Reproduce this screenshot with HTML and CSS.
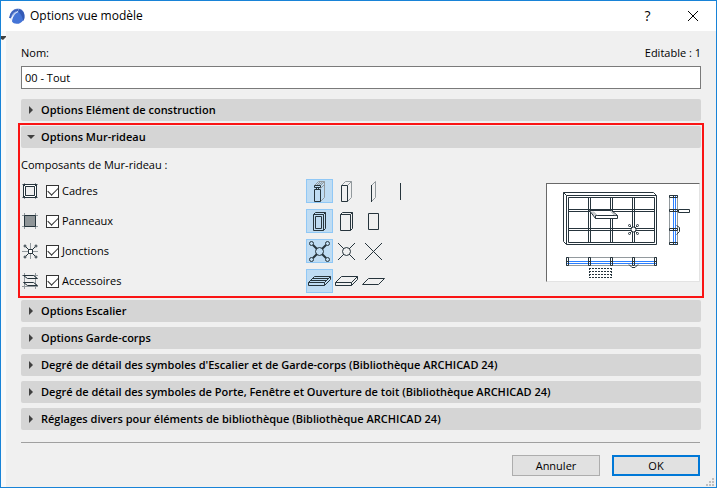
FILE: index.html
```html
<!DOCTYPE html>
<html lang="fr">
<head>
    <meta charset="UTF-8">
    <meta name="viewport" content="width=device-width, initial-scale=1.0">
    <title>Options vue modèle</title>
    <link rel="stylesheet" href="styles.css">
</head>
<body>
    <div class="window">
        <header class="titlebar">
            <svg class="logo" width="16" height="16" viewBox="0 0 16 16">
                <path d="M1 11C0 5 4 .5 9 .5c4 0 6.500 3.500 6.500 7.500 0 2-.5 4-2 5L9 3z" fill="#7f9fe0"/>
                <path d="M1 10C1.500 5 5 2 9 2" fill="none" stroke="#3d62bb" stroke-width="2"/>
                <path d="M2 12.500C3 8 5 5 9 4" fill="none" stroke="#e6edfb" stroke-width="1"/>
                <path d="M10 1c4 1 5.500 4 5.500 7.500 0 2-.5 3.500-1.500 4.500L9 4z" fill="#3359b5"/>
                <path d="M3 13.500C3.500 9 6 5 9.500 4c2.500 2 4 5 4.500 8.500-2 2.500-4 3.500-6.500 3.300-2 0-3.500-1-4.500-2.300z" fill="#4474d6"/>
            </svg>
            <h1>Options vue modèle</h1>
            <button type="button" class="title-but" aria-label="Aide">?</button>
            <button type="button" class="title-but" aria-label="Fermer">
                <svg width="12" height="12" viewBox="0 0 12 12"><path d="M1 1l10 10M11 1L1 11" stroke="#000" fill="none"/></svg>
            </button>
        </header>

        <form class="content">
            <div class="name-row">
                <label for="nom">Nom:</label>
                <span>Editable : 1</span>
            </div>
            <input type="text" id="nom" class="name-input" value="00 - Tout">

            <div class="sections">
                <details>
                    <summary>Options Elément de construction</summary>
                </details>

                <details class="highlight" open>
                    <summary>Options Mur-rideau</summary>
                    <p class="subtitle">Composants de Mur-rideau :</p>
                    <div class="panel">
                        <div class="components">
                            <div class="component">
                                <svg class="icon" width="16" height="16" viewBox="0 0 16 16">
                                    <path class="pale" d="M0 1.500h16M0 14.500h16M2.500 0v16M13.500 0v16"/>
                                    <path class="ink paper" d="M1.500 1.500h13v13h-13z"/>
                                    <path class="ink back" d="M3.500 3.500h9v9h-9zM1.500 1.500l2 2M14.500 1.500l-2 2M1.500 14.500l2-2M14.500 14.500l-2-2"/>
                                </svg>
                                <input type="checkbox" id="cadres" checked>
                                <label for="cadres">Cadres</label>
                                <div class="choices">
                                    <button type="button" class="choice selected" aria-label="Cadres détaillés">
                                        <svg width="27" height="24" viewBox="0 0 27 24">
                                            <path class="pale" d="M8.500 6.500l4-4h6v16l-4 4M14.500 6.500l4-4M10.500 6.500l4-4M14.500 9.500l4-4M12.500 6l4-3"/>
                                            <path class="ink" d="M8.500 10.500h6v12h-6zM8.500 6.500h6v2h-6zM10.500 8v2M12.500 8v2"/>
                                        </svg>
                                    </button>
                                    <button type="button" class="choice" aria-label="Cadres simples">
                                        <svg width="27" height="24" viewBox="0 0 27 24">
                                            <path class="pale" d="M8.500 6.500l4-4h6v16l-4 4M14.500 6.500l4-4"/>
                                            <path class="ink" d="M8.500 6.500h6v16h-6z"/>
                                        </svg>
                                    </button>
                                    <button type="button" class="choice" aria-label="Cadres plans">
                                        <svg width="27" height="24" viewBox="0 0 27 24">
                                            <path class="pale" d="M11.500 6.500l4-4v16l-4 4"/>
                                            <path class="ink" d="M11.500 6v17"/>
                                        </svg>
                                    </button>
                                    <button type="button" class="choice" aria-label="Cadres filaires">
                                        <svg width="27" height="24" viewBox="0 0 27 24"><path class="ink" d="M13.500 4v17"/></svg>
                                    </button>
                                </div>
                            </div>

                            <div class="component">
                                <svg class="icon" width="16" height="16" viewBox="0 0 16 16">
                                    <path class="pale" d="M0 2.500h16M0 13.500h16M2.500 0v16M13.500 0v16"/>
                                    <path class="ink solid" d="M2.500 2.500h11v11h-11z"/>
                                </svg>
                                <input type="checkbox" id="panneaux" checked>
                                <label for="panneaux">Panneaux</label>
                                <div class="choices">
                                    <button type="button" class="choice selected" aria-label="Panneaux détaillés">
                                        <svg width="27" height="24" viewBox="0 0 27 24">
                                            <path class="ink" d="M7.500 5.500h10v16h-10zM9.500 7.500h6v12h-6zM7.500 5.500l2-2h10v16l-2 2M17.500 5.500l2-2"/>
                                        </svg>
                                    </button>
                                    <button type="button" class="choice" aria-label="Panneaux simples">
                                        <svg width="27" height="24" viewBox="0 0 27 24">
                                            <path class="ink" d="M7.500 5.500h10v16h-10zM7.500 5.500l2-2h10v16l-2 2M17.500 5.500l2-2"/>
                                        </svg>
                                    </button>
                                    <button type="button" class="choice" aria-label="Panneaux plans">
                                        <svg width="27" height="24" viewBox="0 0 27 24"><path class="ink" d="M8.500 4.500h10v16h-10z"/></svg>
                                    </button>
                                </div>
                            </div>

                            <div class="component">
                                <svg class="icon" width="16" height="16" viewBox="0 0 16 16">
                                    <path class="pale" d="M0 8.500h16M8.500 0v16"/>
                                    <path class="ink" d="M4 4l3 3M13 4l-3 3M4 13l3-3M13 13l-3-3"/>
                                    <path class="ink paper" d="M6.500 6.500h4v4h-4z"/>
                                    <g class="ink"><circle cx="3" cy="3" r="1"/><circle cx="14" cy="3" r="1"/><circle cx="3" cy="14" r="1"/><circle cx="14" cy="14" r="1"/></g>
                                </svg>
                                <input type="checkbox" id="jonctions" checked>
                                <label for="jonctions">Jonctions</label>
                                <div class="choices">
                                    <button type="button" class="choice selected" aria-label="Jonctions détaillées">
                                        <svg width="27" height="24" viewBox="0 0 27 24">
                                            <path class="ink thick" d="M7 6l4 4M20 6l-4 4M7 19l4-4M20 19l-4-4"/>
                                            <g class="ink"><circle cx="13.500" cy="12.500" r="4"/><circle cx="5.500" cy="4.500" r="2"/><circle cx="21.500" cy="4.500" r="2"/><circle cx="5.500" cy="20.500" r="2"/><circle cx="21.500" cy="20.500" r="2"/></g>
                                        </svg>
                                    </button>
                                    <button type="button" class="choice" aria-label="Jonctions simples">
                                        <svg width="27" height="24" viewBox="0 0 27 24">
                                            <path class="ink" d="M5 4l6 6M22 4l-6 6M5 21l6-6M22 21l-6-6"/>
                                            <circle class="ink" cx="13.500" cy="12.500" r="4"/>
                                        </svg>
                                    </button>
                                    <button type="button" class="choice" aria-label="Jonctions filaires">
                                        <svg width="27" height="24" viewBox="0 0 27 24"><path class="ink" d="M5 4l17 17M22 4L5 21"/></svg>
                                    </button>
                                </div>
                            </div>

                            <div class="component">
                                <svg class="icon" width="16" height="16" viewBox="0 0 16 16">
                                    <path class="pale" d="M0 2.500h16M0 13.500h16M2.500 0v16M13.500 0v16"/>
                                    <path class="ink" d="M1.500 2.500h10l4 3h-10zM1.500 9.500h10l4 3h-10z"/>
                                </svg>
                                <input type="checkbox" id="accessoires" checked>
                                <label for="accessoires">Accessoires</label>
                                <div class="choices">
                                    <button type="button" class="choice selected" aria-label="Accessoires détaillés">
                                        <svg width="27" height="24" viewBox="0 0 27 24">
                                            <path class="ink" d="M2.500 13.500h16v3h-16zM2.500 13.500l6-6h16v3l-6 6M18.500 13.500l6-6M4.500 11.500h16M6.500 9.500h16"/>
                                        </svg>
                                    </button>
                                    <button type="button" class="choice" aria-label="Accessoires simples">
                                        <svg width="27" height="24" viewBox="0 0 27 24">
                                            <path class="ink" d="M2.500 13.500h16v3h-16zM2.500 13.500l6-6h16v3l-6 6M18.500 13.500l6-6"/>
                                        </svg>
                                    </button>
                                    <button type="button" class="choice" aria-label="Accessoires plans">
                                        <svg width="27" height="24" viewBox="0 0 27 24"><path class="ink" d="M2.500 15.500l6-6h16l-6 6z"/></svg>
                                    </button>
                                </div>
                            </div>
                        </div>

                        <svg class="preview" width="154" height="99" viewBox="1 1 152 97">
                            <!-- front view -->
                            <path class="ink" d="M20.500 12.500h90v49h-90zM22.500 14.500h86v45h-86zM20.500 61.500l-3-3v-49h90l3 3M17.500 9.500l3 3"/>
                            <path class="ink" d="M42.500 14v46M44.500 14v46M64.500 14v46M66.500 14v46M86.500 14v46M88.500 14v46"/>
                            <path class="ink" d="M22 26.500h87M22 28.500h87M22 45.500h87M22 47.500h87"/>
                            <path class="ink paper" d="M43.500 27.500h22l6 5v3h-22l-6-8M49.500 35.500v-3h22"/>
                            <path class="pale" d="M45 28.500l4 4M47 28.500l4 4M65 28.500l4 4"/>
                            <g class="ink paper"><path d="M83 42l9 9M92 42l-9 9"/><circle cx="87.500" cy="46.500" r="2.500"/><circle cx="83.500" cy="42.500" r="1"/><circle cx="91.500" cy="42.500" r="1"/><circle cx="83.500" cy="50.500" r="1"/><circle cx="91.500" cy="50.500" r="1"/></g>
                            <!-- side view -->
                            <path class="pale" d="M123.500 12v50M131.500 12v50"/>
                            <path class="blue" d="M127.500 12v50M129.500 12v50"/>
                            <path class="ink" d="M123.500 12.500h8v2h-8zM123.500 26.500h8v2h-8zM123.500 45.500h8v2h-8zM123.500 59.500h8v2h-8zM127.500 12v3M127.500 26v3M127.500 45v3M127.500 59v3"/>
                            <path class="ink paper" d="M132.500 26.500h11v3h-11z"/>
                            <path class="ink" d="M130.500 42.500l3 2v4l-3 3"/>
                            <!-- top view -->
                            <path class="pale" d="M20 74.500h91M20 82.500h91"/>
                            <path class="blue" d="M20 78.500h91M20 80.500h91"/>
                            <path class="ink" d="M20.500 74.500h2v8h-2zM42.500 74.500h2v8h-2zM64.500 74.500h2v8h-2zM86.500 74.500h2v8h-2zM108.500 74.500h2v8h-2zM20 78.500h3M42 78.500h3M64 78.500h3M86 78.500h3M108 78.500h3"/>
                            <path class="ink" d="M83 81.500l3 3h3l3-3"/>
                            <path class="ink dashed" d="M43 85.500h23M43 88.500h23M43 91.500h23M43 94.500h23M43.500 85v10M65.500 85v10"/>
                        </svg>
                    </div>
                </details>

                <details>
                    <summary>Options Escalier</summary>
                </details>
                <details>
                    <summary>Options Garde-corps</summary>
                </details>
                <details>
                    <summary>Degré de détail des symboles d'Escalier et de Garde-corps (Bibliothèque ARCHICAD 24)</summary>
                </details>
                <details>
                    <summary>Degré de détail des symboles de Porte, Fenêtre et Ouverture de toit (Bibliothèque ARCHICAD 24)</summary>
                </details>
                <details>
                    <summary>Réglages divers pour éléments de bibliothèque (Bibliothèque ARCHICAD 24)</summary>
                </details>
            </div>

            <div class="buttons">
                <button type="button">Annuler</button>
                <button type="submit" class="default">OK</button>
            </div>
        </form>

        <svg class="edge-arrow" width="5" height="4" viewBox="0 0 5 4"><path d="M0 0h5v1L2 4 0 3z" fill="#404040"/></svg>
        <svg class="grip" width="8" height="8" viewBox="0 0 8 8"><path d="M6 0h2v2H6zM3 3h2v2H3zM6 3h2v2H6zM0 6h2v2H0zM3 6h2v2H3zM6 6h2v2H6z" fill="#bfbfbf"/></svg>
    </div>
</body>
</html>
```

FILE: styles.css
```css
* {
    box-sizing: border-box;
}
body {
    margin: 0;
    font-family: "Open Sans", "Noto Sans", sans-serif;
    font-size: 11px;
    line-height: 16px;
    color: #000;
}
button, input {
    font: inherit;
    color: inherit;
}
.window {
    position: relative;
    min-height: 100vh;
    border: 1px solid #1883d7;
    background-color: #f0f0f0;
}
.titlebar {
    display: flex;
    align-items: center;
    height: 30px;
    padding: 0 1px 0 8px;
    background-color: #fff;
}
.titlebar h1 {
    flex: 1;
    margin: 0 0 0 5px;
    font-size: 12px;
    font-weight: normal;
}
.title-but {
    display: flex;
    align-items: center;
    justify-content: center;
    width: 45px;
    height: 28px;
    padding: 0;
    border: 0;
    background: none;
    font-size: 14px;
}
.content {
    padding: 14px 15px 11px;
    border-left: 5px solid #f9f9f9;
}
.name-row {
    display: flex;
    justify-content: space-between;
    margin-bottom: 5px;
}
.name-input {
    display: block;
    width: 100%;
    height: 23px;
    padding: 0 3px;
    border: 1px solid #7a7a7a;
    background-color: #fff;
}
.sections {
    display: flex;
    flex-direction: column;
    gap: 5px;
    margin-top: 10px;
}
summary {
    display: flex;
    align-items: center;
    height: 22px;
    padding-left: 6px;
    border-radius: 2px;
    background-color: #d5d5d5;
    font-weight: 600;
}
summary::before {
    content: "";
    width: 14px;
    height: 8px;
    background-color: #404040;
    clip-path: polygon(2px 0, 6px 4px, 2px 8px);
}
details[open] summary::before {
    clip-path: polygon(0 2px, 8px 2px, 4px 6px);
}
.highlight {
    outline: 2px solid #fa1414;
    outline-offset: 1px;
}
.subtitle {
    margin: 9px 0 6px;
}
.panel {
    display: flex;
    justify-content: space-between;
    align-items: flex-start;
    padding: 0 1px 2px;
}
.components {
    display: grid;
    gap: 6px;
}
.component {
    display: grid;
    grid-template-columns: 16px 13px 231px auto;
    column-gap: 8px;
    align-items: center;
    height: 24px;
}
.component input {
    appearance: none;
    width: 13px;
    height: 13px;
    margin: 0;
    border: 1px solid #333;
    background-color: #fff;
}
.component input:checked::before {
    content: "";
    display: block;
    width: 9px;
    height: 5px;
    margin: 1px;
    border: solid #333;
    border-width: 0 0 1px 1px;
    transform: rotate(-45deg);
}
.component label {
    margin-left: -5px;
}
.choices {
    display: flex;
}
.choice {
    width: 27px;
    height: 24px;
    padding: 0;
    border: 0;
    background: none;
}
.choice svg {
    display: block;
}
.selected {
    background-color: #bfdcf3;
    outline: 1px solid #90c8f6;
    outline-offset: -1px;
}
.ink, .pale, .blue {
    fill: none;
    stroke: #26343c;
    stroke-width: 1px;
}
.pale {
    stroke: #92999d;
}
.blue {
    stroke: #2a7fff;
}
.thick {
    stroke-width: 2px;
}
.solid {
    fill: #8f9598;
}
.paper {
    fill: #fff;
}
.back {
    fill: #f0f0f0;
}
.dashed {
    stroke-dasharray: 2 1;
}
.preview {
    margin-top: 4px;
    background-color: #fff;
    border: 1px solid #e3e3e3;
    border-top-color: #696969;
    border-left-color: #696969;
}
.buttons {
    display: flex;
    justify-content: flex-end;
    gap: 12px;
    margin: 12px 1px 0 0;
    padding-top: 12px;
    border-top: 1px solid #a0a0a0;
}
.buttons button {
    width: 88px;
    height: 21px;
    padding: 0;
    border: 1px solid #adadad;
    background-color: #e1e1e1;
}
.buttons .default {
    border: 2px solid #0078d7;
}
/* both sit over the window edge */
.edge-arrow {
    position: absolute;
    top: 35px;
    left: 0;
}
.grip {
    position: absolute;
    right: 2px;
    bottom: 1px;
}
```
